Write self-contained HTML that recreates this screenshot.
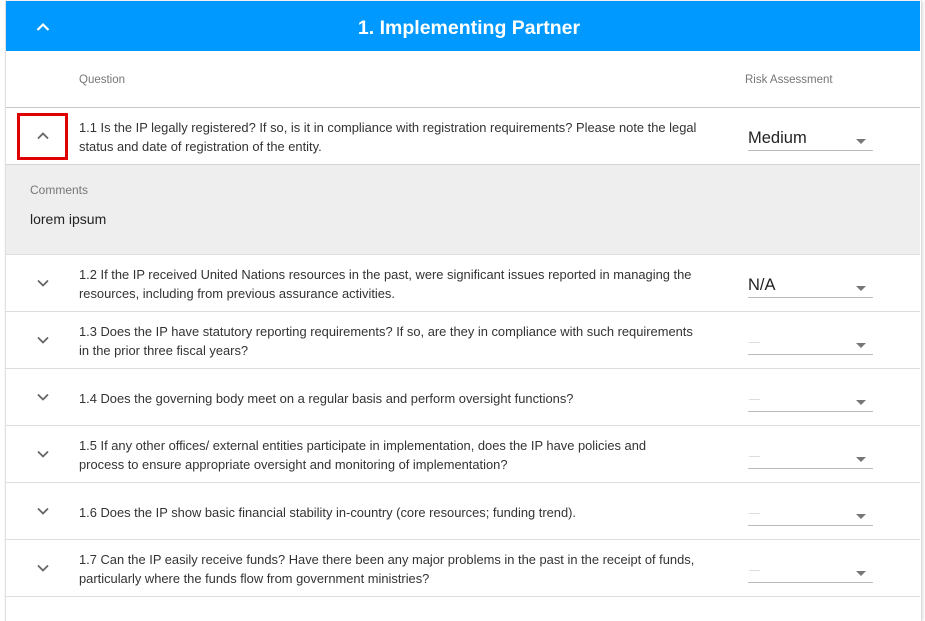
<!DOCTYPE html>
<html><head><style>
body{margin:0;width:925px;height:608px;overflow:hidden;background:#fff;font-family:"Liberation Sans",sans-serif;position:relative}
.card{position:absolute;left:5px;top:1px;width:915px;height:620px;border-left:1px solid #e0e0e0;border-right:1px solid #ddd;box-shadow:1px 0 3px rgba(0,0,0,.15)}
.hdr{position:absolute;left:6px;top:1px;width:914px;height:50px;background:#0099ff;color:#fff;font-size:19.5px;font-weight:bold;text-align:center;line-height:54px}
.hdr span{position:relative;left:6px}
.lbl{position:absolute;font-size:11.5px;color:#777}
.row{position:absolute;left:6px;width:914px;border-bottom:1px solid #ddd}
.q{position:absolute;left:73px;width:622px;font-size:12.9px;color:#333;line-height:19px}
.dd{position:absolute;left:742px;width:125px;border-bottom:1px solid #bbb;height:24px;font-size:16.5px;color:#222}
.dd .t{position:absolute;left:0;top:3px}
.dd .dash{position:absolute;left:1px;top:12px;width:11px;height:1px;background:#ddd}
.tri{position:absolute;right:7px;top:13px;width:0;height:0;border-left:5px solid transparent;border-right:5px solid transparent;border-top:5px solid #777}
svg{position:absolute}
</style></head><body>
<div class="card"></div>
<div class="hdr"><span>1. Implementing Partner</span></div>
<svg style="left:36px;top:22px" width="14" height="10" viewBox="0 0 14 10"><path d="M1.5 8 L7 2.5 L12.5 8" stroke="#fff" stroke-width="2.2" fill="none"/></svg>
<div class="lbl" style="left:79px;top:74px">Question</div>
<div class="lbl" style="left:745px;top:74px">Risk Assessment</div>
<div class="row" style="top:52px;height:55px;border-bottom-color:#c8c8c8"></div>

<div class="row" style="top:108px;height:56px;border-bottom-color:#d4d4d4">
 <div style="position:absolute;left:11px;top:5px;border:3px solid #e00000;box-sizing:border-box;width:51px;height:47px"></div>
 <svg style="left:30px;top:23px" width="14" height="9" viewBox="0 0 14 9"><path d="M2 7.5 L7 2.5 L12 7.5" stroke="#666" stroke-width="1.8" fill="none"/></svg>
 <div class="q" style="top:10px">1.1 Is the IP legally registered? If so, is it in compliance with registration requirements? Please note the legal status and date of registration of the entity.</div>
 <div class="dd" style="top:18px"><span class="t">Medium</span><div class="tri"></div></div>
</div>
<div class="row" style="top:165px;height:89px;background:#eee;border-bottom-color:#ddd">
 <div style="position:absolute;left:24px;top:18px;font-size:12px;color:#777">Comments</div>
 <div style="position:absolute;left:24px;top:46px;font-size:14px;color:#222">lorem ipsum</div>
</div>

<div class="row" style="top:255px;height:56px">
 <svg style="left:30px;top:24px" width="14" height="9" viewBox="0 0 14 9"><path d="M2 1.5 L7 6.5 L12 1.5" stroke="#666" stroke-width="1.8" fill="none"/></svg>
 <div class="q" style="top:10px">1.2 If the IP received United Nations resources in the past, were significant issues reported in managing the resources, including from previous assurance activities.</div>
 <div class="dd" style="top:18px"><span class="t">N/A</span><div class="tri"></div></div>
</div>
<div class="row" style="top:312px;height:56px">
 <svg style="left:30px;top:24px" width="14" height="9" viewBox="0 0 14 9"><path d="M2 1.5 L7 6.5 L12 1.5" stroke="#666" stroke-width="1.8" fill="none"/></svg>
 <div class="q" style="top:10px">1.3 Does the IP have statutory reporting requirements? If so, are they in compliance with such requirements<br>in the prior three fiscal years?</div>
 <div class="dd" style="top:18px"><div class="dash"></div><div class="tri"></div></div>
</div>
<div class="row" style="top:369px;height:56px">
 <svg style="left:30px;top:24px" width="14" height="9" viewBox="0 0 14 9"><path d="M2 1.5 L7 6.5 L12 1.5" stroke="#666" stroke-width="1.8" fill="none"/></svg>
 <div class="q" style="top:20px">1.4 Does the governing body meet on a regular basis and perform oversight functions?</div>
 <div class="dd" style="top:18px"><div class="dash"></div><div class="tri"></div></div>
</div>
<div class="row" style="top:426px;height:56px">
 <svg style="left:30px;top:24px" width="14" height="9" viewBox="0 0 14 9"><path d="M2 1.5 L7 6.5 L12 1.5" stroke="#666" stroke-width="1.8" fill="none"/></svg>
 <div class="q" style="top:10px">1.5 If any other offices/ external entities participate in implementation, does the IP have policies and<br>process to ensure appropriate oversight and monitoring of implementation?</div>
 <div class="dd" style="top:18px"><div class="dash"></div><div class="tri"></div></div>
</div>
<div class="row" style="top:483px;height:56px">
 <svg style="left:30px;top:24px" width="14" height="9" viewBox="0 0 14 9"><path d="M2 1.5 L7 6.5 L12 1.5" stroke="#666" stroke-width="1.8" fill="none"/></svg>
 <div class="q" style="top:20px">1.6 Does the IP show basic financial stability in-country (core resources; funding trend).</div>
 <div class="dd" style="top:18px"><div class="dash"></div><div class="tri"></div></div>
</div>
<div class="row" style="top:540px;height:56px">
 <svg style="left:30px;top:24px" width="14" height="9" viewBox="0 0 14 9"><path d="M2 1.5 L7 6.5 L12 1.5" stroke="#666" stroke-width="1.8" fill="none"/></svg>
 <div class="q" style="top:10px">1.7 Can the IP easily receive funds? Have there been any major problems in the past in the receipt of funds, particularly where the funds flow from government ministries?</div>
 <div class="dd" style="top:18px"><div class="dash"></div><div class="tri"></div></div>
</div>
</body></html>
